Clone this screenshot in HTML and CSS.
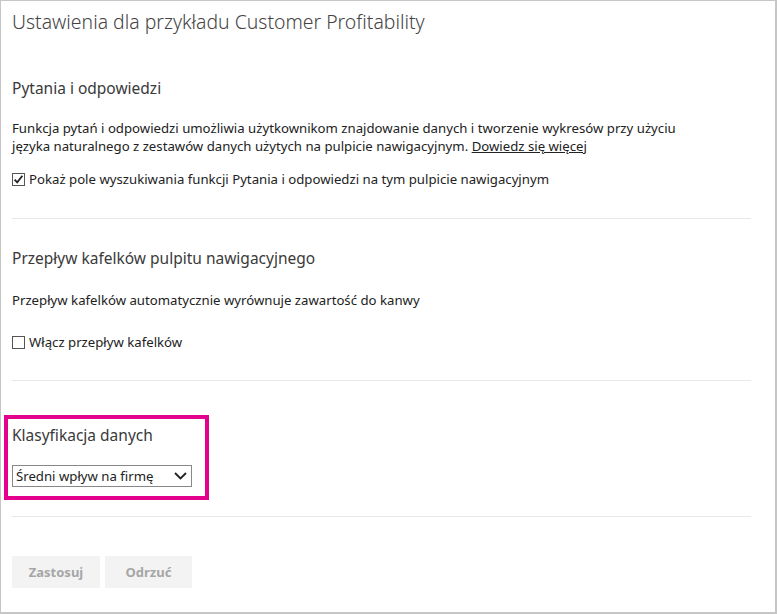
FILE: index.html
```html
<!DOCTYPE html>
<html lang="pl">
<head>
<meta charset="utf-8">
<link rel="stylesheet" href="styles.css">
</head>
<body>
<div class="frame">
  <h1 class="title">Ustawienia dla przykładu Customer Profitability</h1>

  <section class="section first">
    <h2 class="heading">Pytania i odpowiedzi</h2>
    <p class="text">Funkcja pytań i odpowiedzi umożliwia użytkownikom znajdowanie danych i tworzenie wykresów przy użyciu<br>języka naturalnego z zestawów danych użytych na pulpicie nawigacyjnym. <a class="link" href="#">Dowiedz się więcej</a></p>
    <label class="check">
      <span class="box checked"><svg width="11" height="11" viewBox="0 0 11 11"><path d="M1.6 5.6 L4.2 8.4 L9.4 1.8" fill="none" stroke="#222" stroke-width="1.8"/></svg></span>
      <span>Pokaż pole wyszukiwania funkcji Pytania i odpowiedzi na tym pulpicie nawigacyjnym</span>
    </label>
  </section>

  <section class="section second">
    <h2 class="heading">Przepływ kafelków pulpitu nawigacyjnego</h2>
    <p class="text">Przepływ kafelków automatycznie wyrównuje zawartość do kanwy</p>
    <label class="check">
      <span class="box"></span>
      <span>Włącz przepływ kafelków</span>
    </label>
  </section>

  <section class="section classify">
    <h2 class="heading">Klasyfikacja danych</h2>
    <div class="select">
      <span>Średni wpływ na firmę</span>
      <svg width="13" height="8" viewBox="0 0 13 8"><path d="M1 1 L6.5 6.5 L12 1" fill="none" stroke="#222" stroke-width="1.8"/></svg>
    </div>
    <div class="highlight"></div>
  </section>

  <div class="buttons">
    <button class="btn btn-apply">Zastosuj</button>
    <button class="btn btn-discard">Odrzuć</button>
  </div>
</div>
</body>
</html>
```

FILE: styles.css
```css
* { box-sizing: border-box; }
html, body { margin: 0; padding: 0; background: #fff; }
body {
  font-family: "Noto Sans", "Open Sans", sans-serif;
  color: #222;
}
.frame {
  position: relative;
  width: 777px;
  height: 614px;
  border-top: 1px solid #c6c6c6;
  border-left: 1px solid #c6c6c6;
  border-right: 2px solid #c6c6c6;
  border-bottom: 2px solid #c6c6c6;
  padding: 0 24px 0 11px;
}
.title {
  margin: 0;
  padding-top: 7px;
  font-size: 19.4px;
  font-weight: 300;
  line-height: 28px;
  color: #444;
}
.section {
  border-bottom: 1px solid #e8e8e8;
  padding-top: 28px;
}
.section.first { padding-top: 41px; }
.heading {
  margin: 0;
  font-size: 15.5px;
  font-weight: 400;
  line-height: 22px;
  color: #3a3a3a;
}
.text {
  margin: 0;
  font-size: 13.2px;
  line-height: 18px;
  color: #222;
}
.first .text { margin-top: 20px; }
.link { color: #222; text-decoration: underline; }
.check {
  display: flex;
  align-items: center;
  gap: 4px;
  font-size: 13.2px;
  line-height: 18px;
  margin-top: 15px;
  margin-bottom: 30px;
}
.box {
  width: 13px;
  height: 13px;
  border: 1px solid #555;
  display: inline-flex;
  align-items: center;
  justify-content: center;
  background: #fff;
}
.second .text { margin-top: 22px; }
.second .check { margin-top: 24px; margin-bottom: 29px; }
.classify {
  position: relative;
  padding-top: 43px;
  padding-bottom: 29px;
}
.select {
  margin-top: 19px;
  width: 180px;
  height: 22px;
  border: 1px solid #888;
  display: flex;
  align-items: center;
  justify-content: space-between;
  padding: 0 4px 0 3px;
  font-size: 13.2px;
  color: #222;
}
.highlight {
  position: absolute;
  left: -8px;
  top: 34px;
  width: 205px;
  height: 85px;
  border: 4px solid #e3008c;
}
.buttons {
  display: flex;
  gap: 5px;
  margin-top: 39px;
}
.btn {
  width: 88px;
  height: 32px;
  border: 0;
  background: #f3f3f3;
  color: #a6a6a6;
  font-family: "Noto Sans", "Open Sans", sans-serif;
  font-weight: 700;
  font-size: 13px;
  padding: 0;
}
.btn-discard { width: 87px; }
```
